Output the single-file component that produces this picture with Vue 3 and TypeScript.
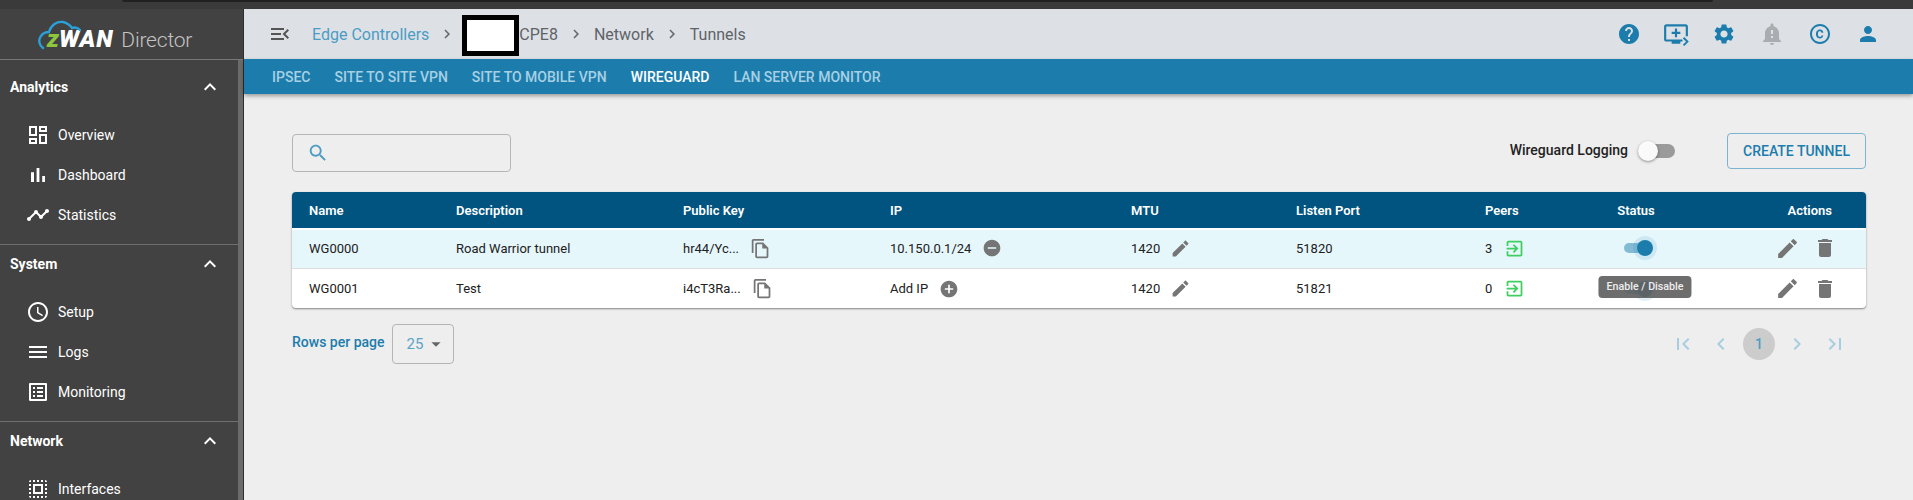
<script setup lang="ts">
const I = {
  up: 'M7.41 15.41L12 10.83l4.59 4.58L18 14l-6-6-6 6z',
  overview: 'M19 5v2h-4V5h4M9 5v6H5V5h4m10 8v6h-4v-6h4M9 17v2H5v-2h4M21 3h-8v6h8V3zM11 3H3v10h8V3zm10 8h-8v10h8V11zm-10 4H3v6h8v-6z',
  bars: 'M5 9.2h3V19H5zM10.6 5h2.8v14h-2.8zm5.6 8H19v6h-2.8z',
  chart: 'M23 8c0 1.1-.9 2-2 2-.18 0-.35-.02-.51-.07l-3.56 3.55c.05.16.07.34.07.52 0 1.1-.9 2-2 2s-2-.9-2-2c0-.18.02-.36.07-.52l-2.55-2.55c-.16.05-.34.07-.52.07s-.36-.02-.52-.07l-4.55 4.56c.05.16.07.33.07.51 0 1.1-.9 2-2 2s-2-.9-2-2 .9-2 2-2c.18 0 .35.02.51.07l4.56-4.55C8.02 9.36 8 9.18 8 9c0-1.1.9-2 2-2s2 .9 2 2c0 .18-.02.36-.07.52l2.55 2.55c.16-.05.34-.07.52-.07s.36.02.52.07l3.55-3.56C19.02 8.35 19 8.18 19 8c0-1.1.9-2 2-2s2 .9 2 2z',
  clock: 'M11.99 2C6.47 2 2 6.48 2 12s4.47 10 9.99 10C17.52 22 22 17.52 22 12S17.52 2 11.99 2zM12 20c-4.42 0-8-3.58-8-8s3.58-8 8-8 8 3.58 8 8-3.58 8-8 8zm.5-13H11v6l5.25 3.15.75-1.23-4.5-2.67z',
  menu: 'M3 18h18v-2H3v2zm0-5h18v-2H3v2zm0-7v2h18V6H3z',
  list: 'M19 5v14H5V5h14m1.1-2H3.9c-.5 0-.9.4-.9.9v16.2c0 .4.4.9.9.9h16.2c.4 0 .9-.5.9-.9V3.9c0-.5-.5-.9-.9-.9zM11 7h6v2h-6V7zm0 4h6v2h-6v-2zm0 4h6v2h-6zM7 7h2v2H7zm0 4h2v2H7zm0 4h2v2H7z',
  select: 'M3 5h2V3c-1.1 0-2 .9-2 2zm0 8h2v-2H3v2zm4 8h2v-2H7v2zM3 9h2V7H3v2zm10-6h-2v2h2V3zm6 0v2h2c0-1.1-.9-2-2-2zM5 21v-2H3c0 1.1.9 2 2 2zm-2-4h2v-2H3v2zM9 3H7v2h2V3zm2 18h2v-2h-2v2zm8-8h2v-2h-2v2zm0 8c1.1 0 2-.9 2-2h-2v2zm0-12h2V7h-2v2zm0 8h2v-2h-2v2zm-4 4h2v-2h-2v2zm0-16h2V3h-2v2zM7 17h10V7H7v10zm2-8h6v6H9V9z',
  menuOpen: 'M3 18h13v-2H3v2zm0-5h10v-2H3v2zm0-7v2h13V6H3zm18 9.59L17.42 12 21 8.41 19.59 7l-5 5 5 5L21 15.59z',
  chevR: 'M10 6L8.59 7.41 13.17 12l-4.58 4.59L10 18l6-6z',
  help: 'M12 2C6.48 2 2 6.48 2 12s4.48 10 10 10 10-4.48 10-10S17.52 2 12 2zm1 17h-2v-2h2v2zm2.07-7.75l-.9.92C13.45 12.9 13 13.5 13 15h-2v-.5c0-1.1.45-2.1 1.17-2.83l1.24-1.26c.37-.36.59-.86.59-1.41 0-1.1-.9-2-2-2s-2 .9-2 2H8c0-2.21 1.79-4 4-4s4 1.79 4 4c0 .88-.36 1.68-.93 2.25z',
  gear: 'M19.14 12.94c.04-.3.06-.61.06-.94 0-.32-.02-.64-.07-.94l2.03-1.58c.18-.14.23-.41.12-.61l-1.92-3.32c-.12-.22-.37-.29-.59-.22l-2.39.96c-.5-.38-1.03-.7-1.62-.94l-.36-2.54c-.04-.24-.24-.41-.48-.41h-3.84c-.24 0-.43.17-.47.41l-.36 2.54c-.59.24-1.13.57-1.62.94l-2.39-.96c-.22-.08-.47 0-.59.22L2.74 8.87c-.12.21-.08.47.12.61l2.03 1.58c-.05.3-.09.63-.09.94s.02.64.07.94l-2.03 1.58c-.18.14-.23.41-.12.61l1.92 3.32c.12.22.37.29.59.22l2.39-.96c.5.38 1.03.7 1.62.94l.36 2.54c.05.24.24.41.48.41h3.84c.24 0 .44-.17.47-.41l.36-2.54c.59-.24 1.13-.56 1.62-.94l2.39.96c.22.08.47 0 .59-.22l1.92-3.32c.12-.22.07-.47-.12-.61l-2.01-1.58zM12 15.6c-1.98 0-3.6-1.62-3.6-3.6s1.62-3.6 3.6-3.6 3.6 1.62 3.6 3.6-1.62 3.6-3.6 3.6z',
  bell: 'M12 23c1.1 0 1.99-.89 1.99-1.99h-3.98c0 1.1.89 1.99 1.99 1.99zm7-6v-6c0-3.35-2.36-6.15-5.5-6.83V3c0-.83-.67-1.5-1.5-1.5s-1.5.67-1.5 1.5v1.17C7.36 4.85 5 7.65 5 11v6l-2 2v1h18v-1l-2-2zm-6-1h-2v-2h2v2zm0-4h-2V8h2v4z',
  copyr: 'M10.08 10.86c.05-.33.16-.62.3-.87s.34-.46.59-.62c.24-.15.54-.22.91-.23.23.01.44.05.63.13.2.09.38.21.52.36s.25.33.34.53.13.42.14.64h1.79c-.02-.47-.11-.9-.28-1.29s-.4-.73-.7-1.01-.66-.5-1.08-.66-.88-.23-1.39-.23c-.65 0-1.22.11-1.7.34s-.88.53-1.2.92-.56.84-.71 1.36S8 11.29 8 11.87v.27c0 .58.08 1.12.23 1.64s.39.97.71 1.35.72.69 1.2.91 1.05.34 1.7.34c.47 0 .91-.08 1.32-.23s.77-.36 1.08-.63.56-.58.74-.94.29-.74.3-1.15h-1.79c-.01.21-.06.4-.15.58s-.21.33-.36.46-.32.23-.52.3c-.19.07-.39.09-.6.1-.36-.01-.66-.08-.89-.23-.25-.16-.45-.37-.59-.62s-.25-.55-.3-.88-.08-.67-.08-1v-.27c0-.35.03-.68.08-1.01zM12 2C6.48 2 2 6.48 2 12s4.48 10 10 10 10-4.48 10-10S17.52 2 12 2zm0 18c-4.41 0-8-3.59-8-8s3.59-8 8-8 8 3.59 8 8-3.59 8-8 8z',
  person: 'M12 12c2.21 0 4-1.79 4-4s-1.79-4-4-4-4 1.79-4 4 1.79 4 4 4zm0 2c-2.67 0-8 1.34-8 4v2h16v-2c0-2.66-5.33-4-8-4z',
  search: 'M15.5 14h-.79l-.28-.27C15.41 12.59 16 11.11 16 9.5 16 5.91 13.09 3 9.5 3S3 5.91 3 9.5 5.91 16 9.5 16c1.61 0 3.09-.59 4.23-1.57l.27.28v.79l5 4.99L20.49 19l-4.99-5zm-6 0C7.01 14 5 11.99 5 9.5S7.01 5 9.5 5 14 7.01 14 9.5 11.99 14 9.5 14z',
  copy: 'M16 1H4c-1.1 0-2 .9-2 2v14h2V3h12V1zm-1 4H8c-1.1 0-1.99.9-1.99 2L6 21c0 1.1.89 2 1.99 2H19c1.1 0 2-.9 2-2V11l-6-6zM8 21V7h6v5h5v9H8z',
  minus: 'M12 2C6.48 2 2 6.48 2 12s4.48 10 10 10 10-4.48 10-10S17.52 2 12 2zm5 11H7v-2h10v2z',
  plus: 'M12 2C6.48 2 2 6.48 2 12s4.48 10 10 10 10-4.48 10-10S17.52 2 12 2zm5 11h-4v4h-2v-4H7v-2h4V7h2v4h4v2z',
  edit: 'M3 17.25V21h3.75L17.81 9.94l-3.75-3.75L3 17.25zM20.71 7.04c.39-.39.39-1.02 0-1.41l-2.34-2.34c-.39-.39-1.02-.39-1.41 0l-1.83 1.83 3.75 3.75 1.83-1.83z',
  del: 'M6 19c0 1.1.9 2 2 2h8c1.1 0 2-.9 2-2V7H6v12zM19 4h-3.5l-1-1h-5l-1 1H5v2h14V4z',
  enter: 'M10.09 15.59L11.5 17l5-5-5-5-1.41 1.41L12.67 11H3v2h9.67l-2.58 2.59zM19 3H5c-1.11 0-2 .9-2 2v4h2V5h14v14H5v-4H3v4c0 1.1.89 2 2 2h14c1.1 0 2-.9 2-2V5c0-1.1-.9-2-2-2z',
  first: 'M18.41 16.59L13.82 12l4.59-4.59L17 6l-6 6 6 6zM6 6h2v12H6z',
  prev: 'M15.41 7.41L14 6l-6 6 6 6 1.41-1.41L10.83 12z',
  last: 'M5.59 7.41L10.18 12l-4.59 4.59L7 18l6-6-6-6zM16 6h2v12h-2z',
  caret: 'M7 10l5 5 5-5z',
}

const nav = [
  { title: 'Analytics', items: [['Overview', I.overview], ['Dashboard', I.bars], ['Statistics', I.chart]] },
  { title: 'System', items: [['Setup', I.clock], ['Logs', I.menu], ['Monitoring', I.list]] },
  { title: 'Network', items: [['Interfaces', I.select]] },
]
const tabs = ['IPSEC', 'SITE TO SITE VPN', 'SITE TO MOBILE VPN', 'WIREGUARD', 'LAN SERVER MONITOR']
const headIcons = [
  { d: I.help, cls: '' },
  { d: '', cls: 'monitor' },
  { d: I.gear, cls: '' },
  { d: I.bell, cls: 'muted' },
  { d: I.copyr, cls: '' },
  { d: I.person, cls: '' },
]
const rows = [
  { name: 'WG0000', desc: 'Road Warrior tunnel', key: 'hr44/Yc...', ip: '10.150.0.1/24', ipIcon: I.minus, mtu: '1420', port: '51820', peers: '3', on: true },
  { name: 'WG0001', desc: 'Test', key: 'i4cT3Ra...', ip: 'Add IP', ipIcon: I.plus, mtu: '1420', port: '51821', peers: '0', on: false },
]
</script>

<template>
  <div class="page">
    <div class="topstrip"><div class="topdark"></div></div>
    <div class="shell">
      <aside class="side">
        <div class="navcol">
          <div class="logo">
            <svg class="cloud" viewBox="0 0 46 34" width="46" height="34">
              <path d="M5 30C1 27 0 22 3 18c2-3 5-4 8-4 2-7 8-11 14-10 4 1 7 3 9 6 3-1 6 0 8 2" fill="none" stroke="#2a9fd8" stroke-width="2.4" stroke-linecap="round" />
            </svg>
            <span class="z">z</span><span class="wan">WAN</span><span class="director">Director</span>
          </div>
          <section v-for="g in nav" :key="g.title" class="group">
            <div class="ghead">
              <span>{{ g.title }}</span>
              <svg viewBox="0 0 24 24" width="24" height="24"><path :d="I.up" /></svg>
            </div>
            <div class="gitems">
              <div v-for="it in g.items" :key="it[0]" class="nitem">
                <svg viewBox="0 0 24 24" width="24" height="24"><path :d="it[1]" /></svg>
                <span>{{ it[0] }}</span>
              </div>
            </div>
          </section>
        </div>
        <div class="scrollbar"></div>
      </aside>

      <main class="main">
        <header class="head">
          <svg class="burger" viewBox="0 0 24 24" width="24" height="24"><path :d="I.menuOpen" /></svg>
          <nav class="crumbs">
            <span class="link">Edge Controllers</span>
            <svg viewBox="0 0 24 24" width="18" height="18"><path :d="I.chevR" /></svg>
            <span class="cpe"><span class="redact"></span>CPE8</span>
            <svg viewBox="0 0 24 24" width="18" height="18"><path :d="I.chevR" /></svg>
            <span>Network</span>
            <svg viewBox="0 0 24 24" width="18" height="18"><path :d="I.chevR" /></svg>
            <span>Tunnels</span>
          </nav>
          <div class="hicons">
            <template v-for="(h, i) in headIcons" :key="i">
              <svg v-if="h.cls === 'monitor'" class="hicon monitor" viewBox="0 0 24 24" width="26" height="26">
                <path d="M21 3H3c-1.1 0-2 .9-2 2v12c0 1.1.9 2 2 2h5v2h8v-2h2v-2H3V5h18v9h2V5c0-1.1-.9-2-2-2zm-5 7v2h-3v3h-2v-3H8v-2h3V7h2v3h3z" />
                <path d="M19 15.5l3.5 3.5-3.5 3.5" fill="none" stroke="#1c7dad" stroke-width="1.8" />
              </svg>
              <svg v-else class="hicon" :class="h.cls" viewBox="0 0 24 24" width="24" height="24"><path :d="h.d" /></svg>
            </template>
          </div>
        </header>
        <div class="tabs">
          <span v-for="t in tabs" :key="t" :class="{ active: t === 'WIREGUARD' }">{{ t }}</span>
        </div>

        <div class="content">
          <div class="toolbar">
            <div class="search">
              <svg viewBox="0 0 24 24" width="22" height="22"><path :d="I.search" /></svg>
            </div>
            <div class="tools">
              <span class="loglabel">Wireguard Logging</span>
              <span class="switch off"><i></i></span>
              <button class="create">CREATE TUNNEL</button>
            </div>
          </div>

          <div class="table">
            <div class="tr th">
              <span>Name</span><span>Description</span><span>Public Key</span><span>IP</span><span>MTU</span>
              <span>Listen Port</span><span>Peers</span><span class="c-status">Status</span><span class="c-act">Actions</span>
            </div>
            <div v-for="(r, idx) in rows" :key="r.name" class="tr td" :class="{ hl: idx === 0 }">
              <span>{{ r.name }}</span>
              <span>{{ r.desc }}</span>
              <span class="cell"><span class="keytxt">{{ r.key }}</span>
                <svg class="ic" viewBox="0 0 24 24" width="21" height="21"><path :d="I.copy" /></svg></span>
              <span class="cell"><span>{{ r.ip }}</span>
                <svg class="ic ipic" viewBox="0 0 24 24" width="20" height="20"><path :d="r.ipIcon" /></svg></span>
              <span class="cell"><span>{{ r.mtu }}</span>
                <svg class="ic mtuic" viewBox="0 0 24 24" width="21" height="21"><path :d="I.edit" /></svg></span>
              <span>{{ r.port }}</span>
              <span class="cell"><span>{{ r.peers }}</span>
                <svg class="enter" viewBox="0 0 24 24" width="21" height="21"><path :d="I.enter" /></svg></span>
              <span class="c-status statuscell">
                <span class="switch on"><i></i></span>
                <span v-if="!r.on" class="tooltip">Enable / Disable</span>
              </span>
              <span class="c-act acts">
                <svg class="ic" viewBox="0 0 24 24" width="25" height="25"><path :d="I.edit" /></svg>
                <svg class="ic" viewBox="0 0 24 24" width="24" height="24"><path :d="I.del" /></svg>
              </span>
            </div>
          </div>

          <div class="foot">
            <div class="rpp">
              <span class="rpplabel">Rows per page</span>
              <div class="select"><span>25</span>
                <svg viewBox="0 0 24 24" width="22" height="22"><path :d="I.caret" /></svg></div>
            </div>
            <div class="pager">
              <svg viewBox="0 0 24 24" width="24" height="24"><path :d="I.first" /></svg>
              <svg viewBox="0 0 24 24" width="24" height="24"><path :d="I.prev" /></svg>
              <span class="pnum">1</span>
              <svg viewBox="0 0 24 24" width="24" height="24"><path :d="I.chevR" /></svg>
              <svg viewBox="0 0 24 24" width="24" height="24"><path :d="I.last" /></svg>
            </div>
          </div>
        </div>
      </main>
    </div>
  </div>
</template>

<style>
html, body { margin: 0; height: 500px; overflow: hidden; background: #eee; }
</style>

<style scoped>
.page { width: 1913px; height: 500px; display: flex; flex-direction: column; overflow: hidden; font-family: Roboto, "Liberation Sans", sans-serif; }
.topstrip { height: 9px; flex: none; background: #3a3a3a; }
.topdark { height: 2px; margin: 0 200px 0 122px; background: #202020; border-radius: 0 0 6px 6px; }
.shell { flex: 1; display: flex; min-height: 0; }

.side { width: 243px; flex: none; display: flex; background: #424242; border-right: 1px solid #2e2e2e; overflow: hidden; }
.navcol { width: 238px; flex: none; }
.scrollbar { width: 5px; background: #6b6b6b; margin-top: 51px; }
.logo { position: relative; display: flex; align-items: center; padding-left: 47px; margin-right: -5px; border-bottom: 1px solid #777; color: #fff; box-sizing: border-box; height: 51px; }
.cloud { position: absolute; left: 38px; top: 9px; }
.z { font: italic 900 24px Roboto, sans-serif; color: #8cc63f; margin-top: 9px; }
.wan { font: italic 900 24px Roboto, sans-serif; color: #fff; letter-spacing: .8px; margin-top: 9px; }
.director { font: 300 21px Roboto, sans-serif; color: #c4c4c4; margin-left: 8px; margin-top: 12px; letter-spacing: -.2px; }
.group { border-bottom: 1px solid #6e6e6e; padding-bottom: 9px; }
.ghead { height: 38px; padding: 0 16px 0 10px; display: flex; align-items: center; justify-content: space-between; box-sizing: border-box; color: #fff; font-size: 14px; font-weight: 700; margin-bottom: 9px; }
.ghead svg { fill: #fff; }
.group:first-of-type .ghead { margin-top: 8px; }
.gitems { display: flex; flex-direction: column; }
.nitem { height: 40px; display: flex; align-items: center; gap: 8px; padding-left: 26px; color: #fff; font-size: 14px; }
.nitem svg { fill: #fff; }
.group:last-child { border-bottom: 0; }

.main { flex: 1; min-width: 0; display: flex; flex-direction: column; }
.head { height: 50px; flex: none; background: #dde1e6; display: flex; align-items: center; padding-left: 24px; }
.burger { fill: #555; }
.crumbs { margin-left: 20px; display: flex; align-items: center; gap: 9px; font-size: 16px; color: #5f6368; }
.crumbs svg { fill: #666; }
.crumbs .link { color: #4c9cc4; }
.cpe { position: relative; margin-left: 54px; }
.redact { position: absolute; left: -57px; top: -10px; width: 57px; height: 41px; box-sizing: border-box; background: #fff; border: 5px solid #000; }
.hicons { margin-left: auto; display: flex; align-items: center; gap: 24px; padding-right: 33px; }
.hicon { fill: #1c7dad; }
.hicon.muted { fill: #a9adb0; }
.hicon.monitor { margin-right: -1px; margin-left: -2px; }
.tabs { height: 35px; flex: none; background: #1c7dad; display: flex; align-items: center; gap: 24px; padding-left: 28px; font-size: 14px; font-weight: 500; color: #a8d0e3; box-shadow: 0 2px 4px rgba(0,0,0,.35); position: relative; }
.tabs .active { color: #fff; }

.content { flex: 1; background: #eee; padding: 39px 47px 0 48px; min-height: 0; }
.toolbar { display: flex; justify-content: space-between; align-items: center; height: 40px; margin-bottom: 19px; }
.search { width: 219px; height: 38px; box-sizing: border-box; border: 1px solid #b5b5b5; border-radius: 4px; display: flex; align-items: center; padding-left: 14px; }
.search svg { fill: #4c9cc4; }
.tools { display: flex; align-items: center; margin-top: -4px; }
.loglabel { font-size: 14px; font-weight: 500; color: #222; margin-bottom: 2px; }
.switch { position: relative; display: inline-block; width: 35px; height: 14px; border-radius: 7px; }
.switch i { position: absolute; top: -3px; width: 20px; height: 20px; border-radius: 50%; }
.switch.off { background: #9a9a9a; margin: 0 52px 0 12px; }
.switch.off i { left: -2px; background: #fafafa; box-shadow: 0 1px 3px rgba(0,0,0,.4); }
.switch.on { background: #83bbd5; width: 26px; height: 10px; margin-left: 2px; }
.switch.on i { right: -3px; top: -3px; width: 16px; height: 16px; background: #1c7dad; box-shadow: 0 0 0 4px rgba(28,125,173,.12); }
.create { width: 139px; height: 36px; background: transparent; border: 1px solid #7cb4cf; border-radius: 4px; color: #1c7dad; font: 500 14px Roboto, sans-serif; padding: 0; }

.table { background: #fff; border-radius: 4px; box-shadow: 0 1px 2px rgba(0,0,0,.45); }
.tr { display: grid; grid-template-columns: 147px 227px 207px 241px 165px 189px 111px 80px 156px; padding: 0 34px 0 17px; align-items: center; font-size: 13px; }
.th { height: 36px; background: #01547f; color: #fff; border-radius: 4px 4px 0 0; font-weight: 600; margin-bottom: 2px; }
.td { height: 38px; color: #212121; font-weight: 400; border-bottom: 1px solid #ddd; }
.td:last-child { height: 39px; border-bottom: 0; }
.td.hl { background: #e6f7fc; height: 36px; padding-bottom: 2px; }
.cell { display: flex; align-items: center; }
.ic { fill: #757575; }
.keytxt { margin-right: 11px; }
.ipic { margin-left: 11px; }
.mtuic { margin-left: 10px; }
.enter { fill: #3ecf5e; margin-left: 12px; }
.c-status { text-align: center; }
.c-act { text-align: right; }
.statuscell { position: relative; display: flex; justify-content: center; }
.tooltip { position: absolute; left: 50%; top: -8px; transform: translateX(-50%); margin-left: 9px; padding: 0 8px; height: 22px; line-height: 21px; background: rgba(97,97,97,.92); color: #eee; font-size: 10.7px; font-weight: 500; border-radius: 4px; white-space: nowrap; }
.acts { display: flex; justify-content: flex-end; gap: 13px; margin-right: -5px; align-items: center; }

.foot { display: flex; justify-content: space-between; align-items: center; margin-top: 16px; }
.rpp { display: flex; align-items: center; gap: 8px; color: #1c7dad; font-size: 14px; font-weight: 500; }
.rpplabel { margin-bottom: 5px; }
.select { width: 47px; height: 38px; padding-left: 13px; border: 1px solid #b5b5b5; border-radius: 4px; display: flex; align-items: center; font-size: 15px; font-weight: 400; color: #5ba3c7; gap: 2px; }
.select svg { fill: #666; }
.pager { display: flex; align-items: center; gap: 14px; padding-right: 19px; }
.pager svg { fill: #a9cde0; }
.pnum { width: 32px; height: 32px; margin: 0 -4px; border-radius: 50%; background: #ccc; color: #4c9cc4; display: flex; align-items: center; justify-content: center; font-size: 14px; font-weight: 500; }
</style>
